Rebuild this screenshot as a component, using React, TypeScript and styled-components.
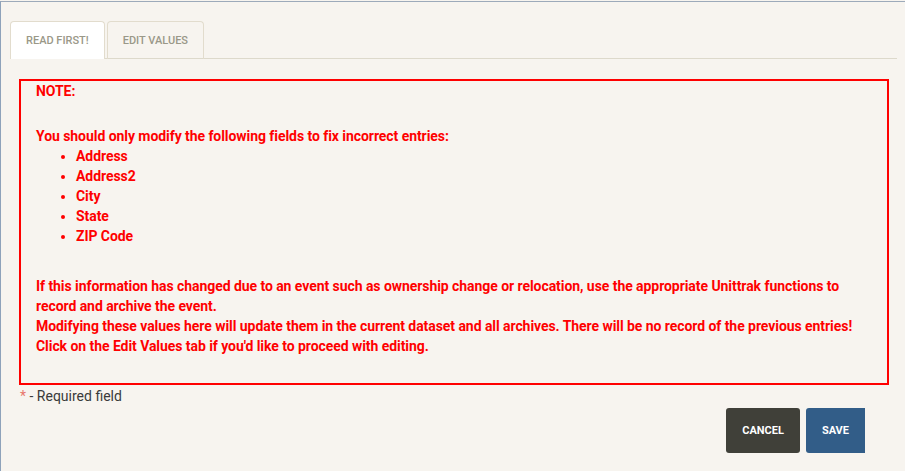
import React, { FC } from 'react'
import styled, { createGlobalStyle } from 'styled-components'

const GlobalStyle = createGlobalStyle`
  html, body {
    margin: 0;
    padding: 0;
    background: #f7f4ef;
    font-family: Roboto, "Liberation Sans", Arial, sans-serif;
  }
`

const Frame = styled.div`
  box-sizing: border-box;
  margin-top: 1px;
  height: 470px;
  border-top: 1px solid #9daaba;
  border-left: 1px solid #8ea2ba;
  background: #f7f4ef;
  padding: 19px 8px 0 9px;
  overflow: hidden;
`

const TabBar = styled.div`
  display: flex;
  gap: 2px;
  border-bottom: 1px solid #ddd9cb;
`

const Tab = styled.div<{ $active?: boolean }>`
  box-sizing: border-box;
  height: 38px;
  padding: 0 15px;
  display: flex;
  align-items: center;
  border: 1px solid #e2dccd;
  border-bottom: none;
  border-radius: 4px 4px 0 0;
  margin-bottom: -1px;
  background: ${p => (p.$active ? '#ffffff' : 'transparent')};
  color: #9a9888;
  font-size: 11px;
  font-weight: 500;
  text-transform: uppercase;
`

const NoteBox = styled.div`
  margin: 20px 8px 0 9px;
  border: 2px solid #ff0000;
  padding: 0 15px 27px 15px;
  color: #ff0000;
  font-size: 14px;
  font-weight: 700;
  line-height: 20px;
  letter-spacing: -0.06px;
`

const Para = styled.p<{ $gap?: number }>`
  margin: 0 0 ${p => p.$gap ?? 0}px 0;
`

const FieldList = styled.ul`
  margin: 0 0 30px 0;
  padding-left: 40px;
`

const Required = styled.div`
  margin-top: 1px;
  padding-left: 10px;
  font-size: 14px;
  line-height: 20px;
  color: #3a3a3a;
  span {
    color: #e8776c;
  }
`

const ButtonRow = styled.div`
  display: flex;
  justify-content: flex-end;
  gap: 6px;
  margin-top: 2px;
  padding-right: 32px;
`

const Button = styled.button<{ $variant: 'cancel' | 'save' }>`
  height: 45px;
  border: none;
  padding: 0 16px;
  border-radius: ${p => (p.$variant === 'cancel' ? '3px' : '3px 0 0 3px')};
  background: ${p => (p.$variant === 'cancel' ? '#404039' : '#325d88')};
  color: #ffffff;
  font-family: Roboto, "Liberation Sans", Arial, sans-serif;
  font-size: 11px;
  font-weight: 700;
  text-transform: uppercase;
`

const fields = ['Address', 'Address2', 'City', 'State', 'ZIP Code']

const App: FC = () => {
  return (
    <>
      <GlobalStyle />
      <Frame>
        <TabBar>
          <Tab $active>Read First!</Tab>
          <Tab>Edit Values</Tab>
        </TabBar>
        <NoteBox>
          <Para $gap={25}>NOTE:</Para>
          <Para>You should only modify the following fields to fix incorrect entries:</Para>
          <FieldList>
            {fields.map(f => (
              <li key={f}>{f}</li>
            ))}
          </FieldList>
          <Para>
            If this information has changed due to an event such as ownership change or relocation, use the
            appropriate Unittrak functions to record and archive the event.
          </Para>
          <Para>
            Modifying these values here will update them in the current dataset and all archives. There will be no
            record of the previous entries!
          </Para>
          <Para>Click on the Edit Values tab if you'd like to proceed with editing.</Para>
        </NoteBox>
        <Required>
          <span>*</span> - Required field
        </Required>
        <ButtonRow>
          <Button $variant="cancel">Cancel</Button>
          <Button $variant="save">Save</Button>
        </ButtonRow>
      </Frame>
    </>
  )
}

export default App
